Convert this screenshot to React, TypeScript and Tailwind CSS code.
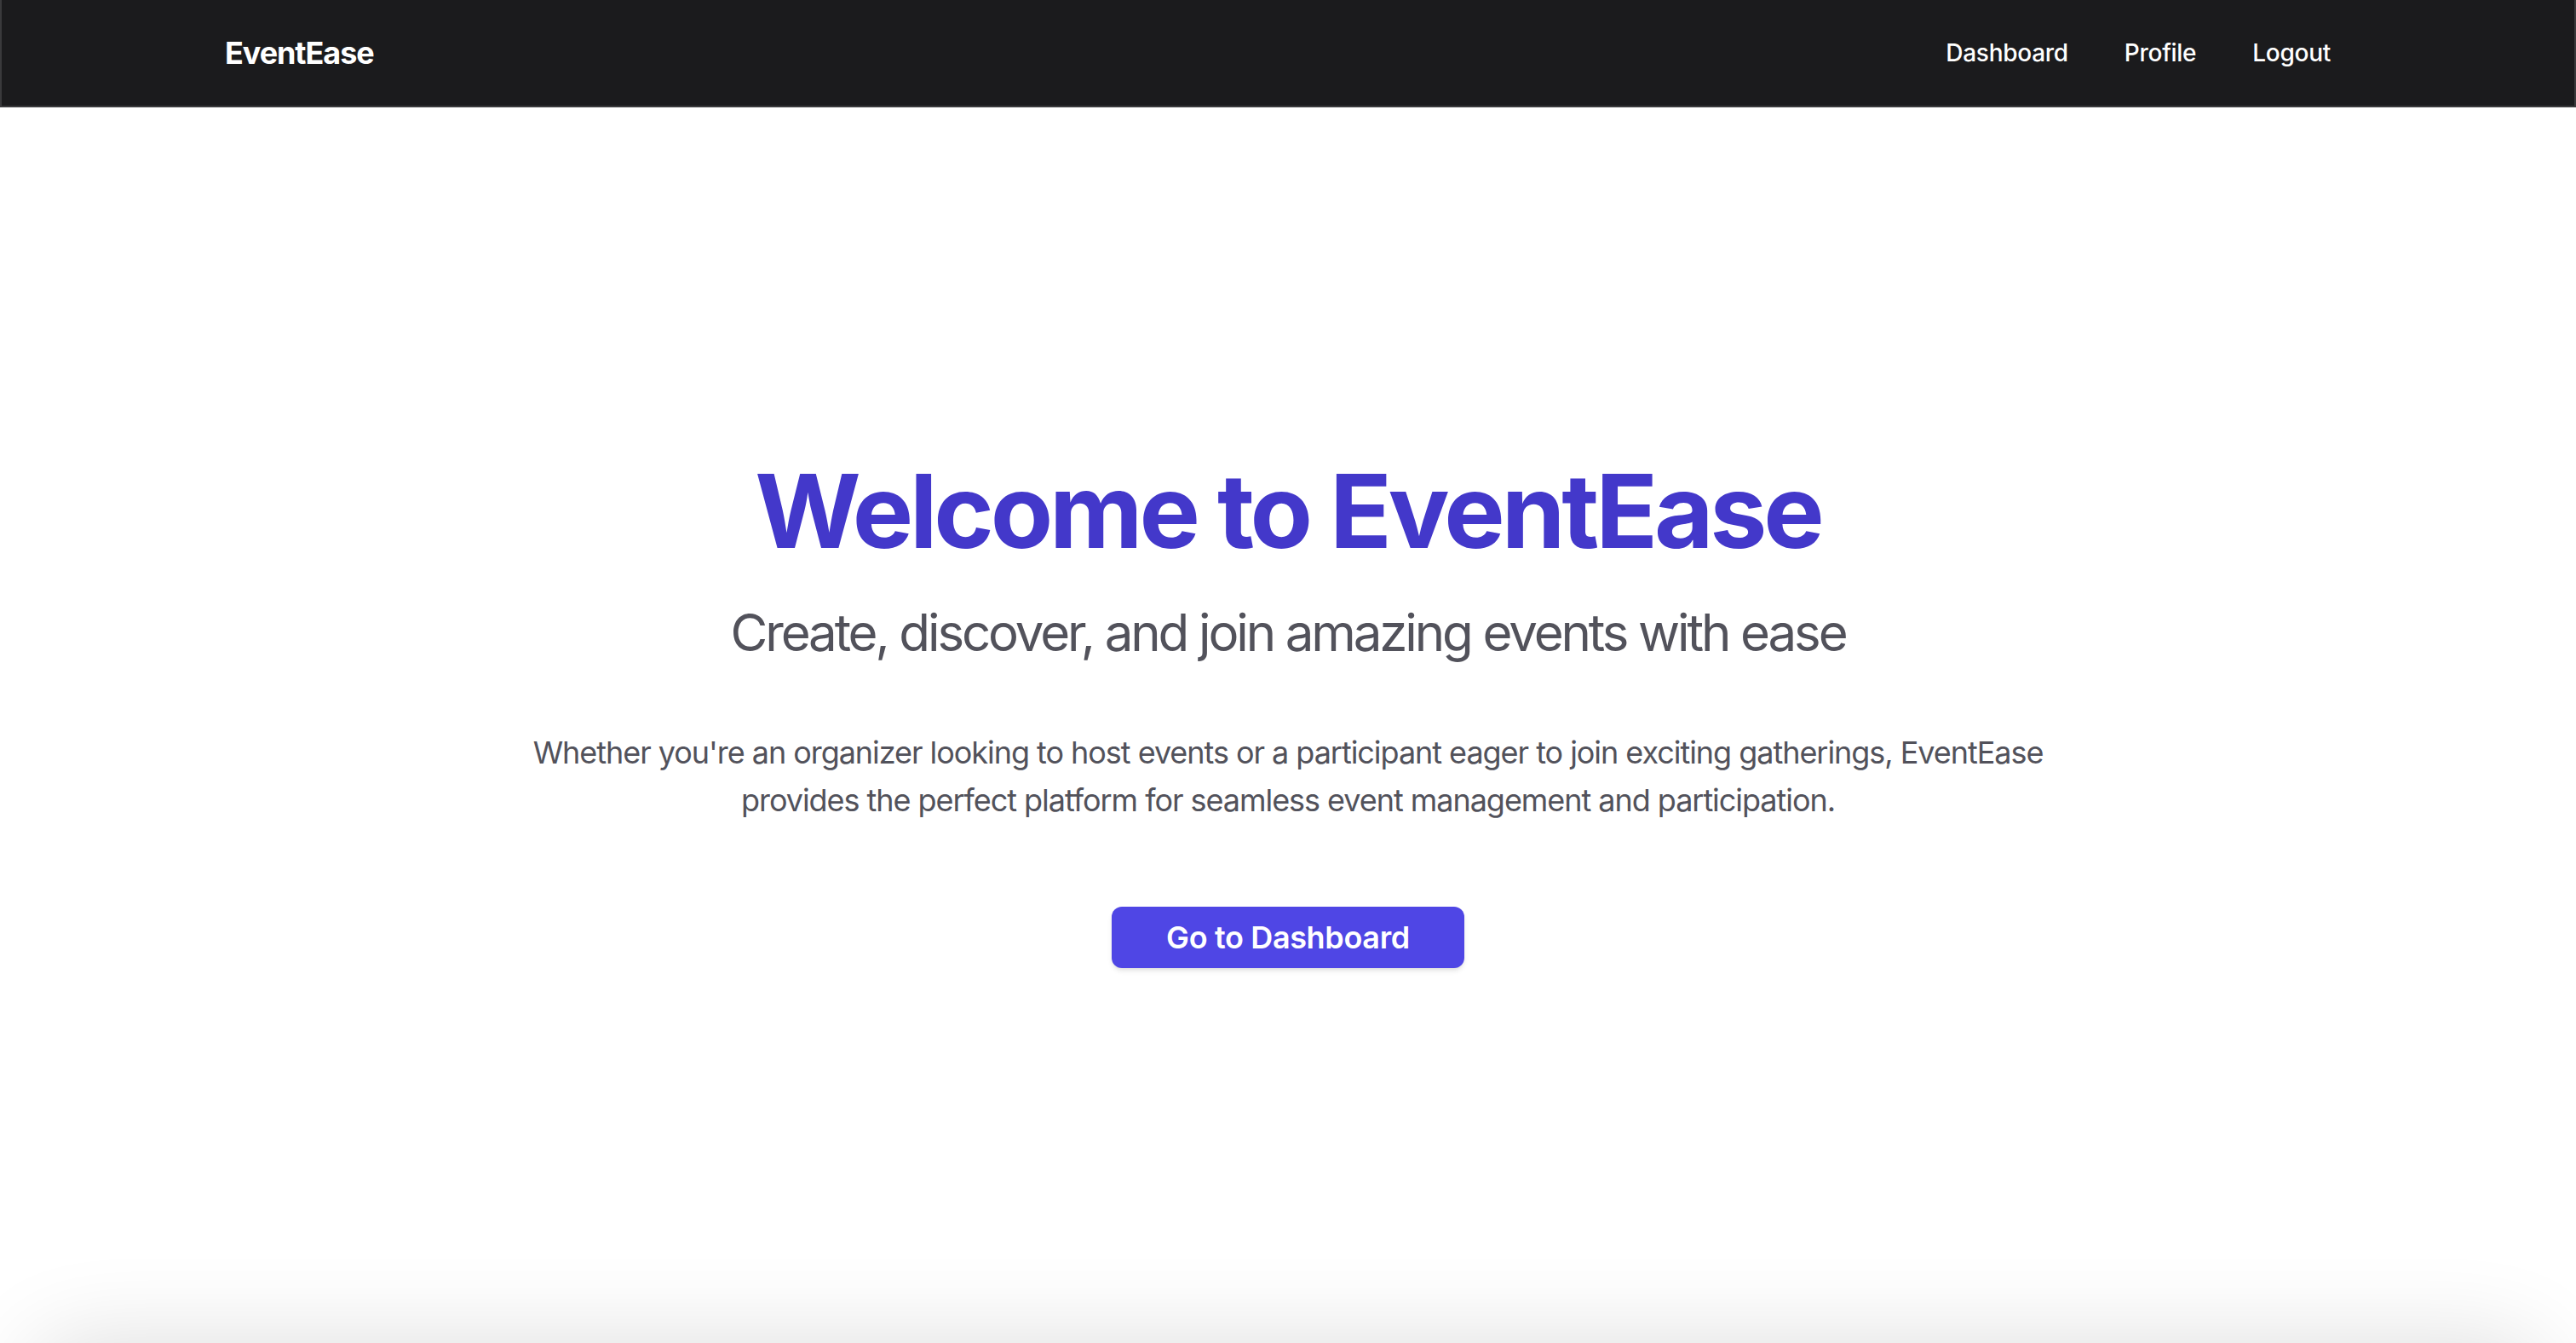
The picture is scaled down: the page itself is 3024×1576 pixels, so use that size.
import React from 'react';

const links = ['Dashboard', 'Profile', 'Logout'];

const Navbar = () => {
  return (
    <nav className="bg-[#1b1b1d] border-x-2 border-b-2 border-[#3a3a3c]">
      <div className="max-w-[2560px] mx-auto px-[32px] h-[124px] flex items-center justify-between">
        <a href="#" className="text-white text-[36px] font-bold tracking-[-0.03em]">
          EventEase
        </a>
        <div className="flex items-center gap-[18px]">
          {links.map((link) => (
            <a
              key={link}
              href="#"
              className="px-[24px] py-[16px] rounded-md text-white text-[28px] font-medium tracking-[-0.01em] hover:bg-zinc-700"
            >
              {link}
            </a>
          ))}
        </div>
      </div>
    </nav>
  );
};

const App = () => {
  return (
    <div
      className="h-[1576px] overflow-hidden bg-white"
      style={{ fontFamily: 'Inter, "Noto Sans", sans-serif' }}
    >
      <Navbar />
      <main className="h-[1450px] flex flex-col items-center pt-[414px] px-[32px] text-center">
        <h1 className="text-[120px] leading-none font-bold tracking-[-0.035em] text-[#4338ca] mb-[46px]">
          Welcome to EventEase
        </h1>
        <p className="text-[60px] leading-[72px] tracking-[-0.052em] text-[#52525b] mb-[77px]">
          Create, discover, and join amazing events with ease
        </p>
        <p className="max-w-[1800px] text-[36px] leading-[56px] tracking-[-0.029em] text-[#52525b] mb-[97px]">
          Whether you're an organizer looking to host events or a participant eager to join
          exciting gatherings, EventEase provides the perfect platform for seamless event
          management and participation.
        </p>
        <button
          type="button"
          className="bg-[#4f46e5] hover:bg-[#4338ca] text-white text-[36px] leading-[56px] font-semibold tracking-[-0.01em] px-[64px] py-[8px] rounded-[12px] shadow-md"
        >
          Go to Dashboard
        </button>
      </main>
      <section className="mx-[40px] h-[300px] rounded-[48px] bg-white shadow-[0_0_110px_rgba(0,0,0,0.14)]" />
    </div>
  );
};

export default App;
